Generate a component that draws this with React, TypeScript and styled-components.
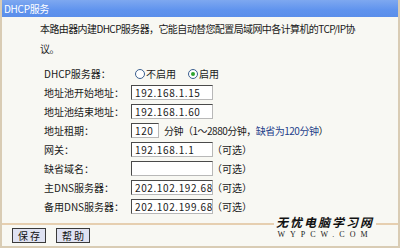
import React from 'react';
import styled, { createGlobalStyle } from 'styled-components';

const GlobalStyle = createGlobalStyle`
  html, body {
    margin: 0;
    padding: 0;
    background: #ffffff;
  }
  body {
    font-family: "Noto Sans CJK SC", "DejaVu Sans", sans-serif;
    font-size: 10px;
    color: #1a1a1a;
  }
`;

interface FieldRow {
  label: string;
  value: string;
  optional?: boolean;
}

const ADDRESS_ROWS: FieldRow[] = [
  { label: '地址池开始地址：', value: '192.168.1.15' },
  { label: '地址池结束地址：', value: '192.168.1.60' },
];

const NETWORK_ROWS: FieldRow[] = [
  { label: '网关：', value: '192.168.1.1', optional: true },
  { label: '缺省域名：', value: '', optional: true },
  { label: '主DNS服务器：', value: '202.102.192.68', optional: true },
  { label: '备用DNS服务器：', value: '202.102.199.68', optional: true },
];

const App: React.FC = () => {
  return (
    <>
      <GlobalStyle />
      <Frame>
        <TitleBar>DHCP服务</TitleBar>
        <Content>
          <Intro>
            本路由器内建DHCP服务器，它能自动替您配置局域网中各计算机的TCP/IP协
            <br />
            议。
          </Intro>
          <Form>
            <Row>
              <Label>DHCP服务器：</Label>
              <Field>
                <RadioOption>
                  <Radio $checked={false} />
                  不启用
                </RadioOption>
                <RadioOption>
                  <Radio $checked />
                  启用
                </RadioOption>
              </Field>
            </Row>
            {ADDRESS_ROWS.map((row) => (
              <Row key={row.label}>
                <Label>{row.label}</Label>
                <Field>
                  <Input $width={82}>{row.value}</Input>
                </Field>
              </Row>
            ))}
            <Row>
              <Label>地址租期：</Label>
              <Field>
                <Input $width={28}>120</Input>
                <Hint>
                  分钟（1～2880分钟，<Note>缺省为120分钟</Note>）
                </Hint>
              </Field>
            </Row>
            {NETWORK_ROWS.map((row) => (
              <Row key={row.label}>
                <Label>{row.label}</Label>
                <Field>
                  <Input $width={82}>{row.value}</Input>
                  {row.optional && <Optional>（可选）</Optional>}
                </Field>
              </Row>
            ))}
          </Form>
        </Content>
        <Footer>
          <Button>保 存</Button>
          <Button>帮 助</Button>
          <Watermark>
            <WatermarkTitle>无忧电脑学习网</WatermarkTitle>
            <WatermarkUrl>WYPCW.COM</WatermarkUrl>
          </Watermark>
        </Footer>
      </Frame>
    </>
  );
};

// --- Styled Components ---

const Frame = styled.div`
  position: relative;
  width: 400px;
  height: 248px;
  box-sizing: border-box;
  display: flex;
  flex-direction: column;
  background: #f8f8f3;
  border-left: 2px solid #d9ccb4;
  border-right: 2px solid #d9ccb4;
  border-bottom: 2px solid #d9ccb4;
  overflow: hidden;
`;

const TitleBar = styled.div`
  height: 17px;
  flex-shrink: 0;
  display: flex;
  align-items: center;
  padding-left: 4px;
  margin: 0 -2px;
  background: linear-gradient(to bottom, #7ea8f0, #5f93ee 60%, #5a8eea);
  color: #ffffff;
  font-size: 10px;
  line-height: 12px;
  letter-spacing: -0.3px;
`;

const Content = styled.div`
  flex: 1;
  min-height: 0;
  padding: 2px 0 0 38px;
`;

const Intro = styled.p`
  margin: 0;
  font-size: 10px;
  line-height: 20px;
  letter-spacing: -0.6px;
  white-space: nowrap;
`;

const Form = styled.div`
  margin-top: 5px;
  display: flex;
  flex-direction: column;
`;

const Row = styled.div`
  display: grid;
  grid-template-columns: 87px 1fr;
  align-items: center;
  height: 19px;
  padding-left: 4px;
  line-height: 13px;
`;

const Label = styled.span`
  font-size: 10px;
  white-space: nowrap;
`;

const Field = styled.div`
  display: flex;
  align-items: center;
  gap: 2px;
  height: 19px;
`;

const RadioOption = styled.label`
  display: flex;
  align-items: center;
  gap: 1px;
  margin-left: 4px;
  margin-right: 6px;
  font-size: 10px;
`;

const Radio = styled.span<{ $checked: boolean }>`
  box-sizing: border-box;
  width: 10px;
  height: 10px;
  border-radius: 50%;
  border: 1px solid #3b5f8f;
  background: #ffffff;
  display: inline-flex;
  align-items: center;
  justify-content: center;

  &::after {
    content: '';
    width: 4px;
    height: 4px;
    border-radius: 50%;
    background: ${(props) => (props.$checked ? '#2fa52f' : 'transparent')};
  }
`;

const Input = styled.div<{ $width: number }>`
  box-sizing: border-box;
  width: ${(props) => props.$width}px;
  height: 15px;
  border: 1px solid #4a4a4a;
  border-right-color: #b8b8b8;
  border-bottom-color: #b8b8b8;
  background: #ffffff;
  padding-left: 3px;
  font-size: 10px;
  line-height: 13px;
  letter-spacing: 0.6px;
  white-space: nowrap;
  overflow: hidden;
`;

const Hint = styled.span`
  margin-left: 3px;
  font-size: 10px;
  letter-spacing: -0.5px;
  white-space: nowrap;
`;

const Note = styled.span`
  color: #25408a;
`;

const Optional = styled.span`
  margin-left: -3px;
  font-size: 10px;
  white-space: nowrap;
`;

const Footer = styled.div`
  position: relative;
  height: 21px;
  flex-shrink: 0;
  display: flex;
  align-items: center;
  gap: 10px;
  padding-left: 10px;
  border-top: 2px solid #e6cfb0;
`;

const Button = styled.button`
  box-sizing: border-box;
  width: 34px;
  height: 15px;
  padding: 0;
  border: 1px solid #3a3a3a;
  background: #dfe2f2;
  font-family: "Noto Sans CJK SC", sans-serif;
  font-size: 10px;
  line-height: 13px;
  color: #111111;
`;

const Watermark = styled.div`
  position: absolute;
  left: 272px;
  top: -10px;
  display: flex;
  flex-direction: column;
  align-items: center;
`;

const WatermarkTitle = styled.span`
  font-family: "Noto Sans CJK SC", sans-serif;
  font-size: 12px;
  font-weight: 700;
  font-style: italic;
  letter-spacing: 2px;
  line-height: 14px;
  white-space: nowrap;
  color: #111111;
  background: #f8f8f3;
  padding: 0 2px;
`;

const WatermarkUrl = styled.span`
  font-family: "Liberation Serif", serif;
  font-size: 8px;
  letter-spacing: 5px;
  line-height: 9px;
  margin-top: 1px;
  white-space: nowrap;
  color: #222222;
`;

export default App;
